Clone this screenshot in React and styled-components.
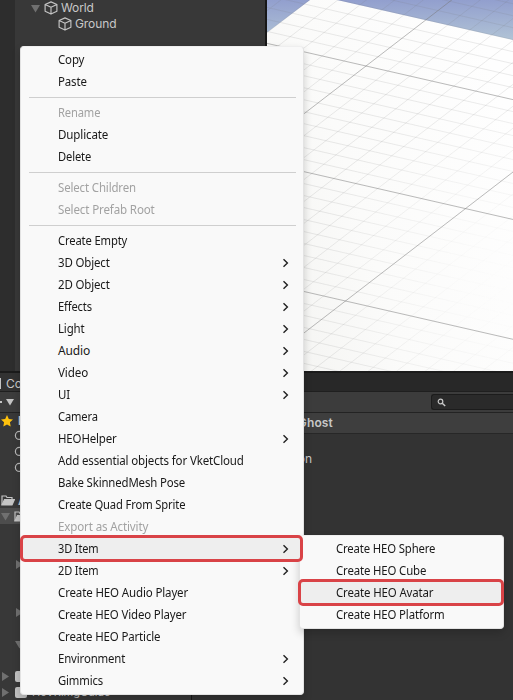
import React from "react";
import styled, { createGlobalStyle } from "styled-components";

const GlobalStyle = createGlobalStyle`
  * { box-sizing: border-box; }
  body { margin: 0; background: #333; overflow: hidden; }
`;

const Editor = styled.div`
  position: relative;
  width: 513px;
  height: 700px;
  overflow: hidden;
  display: grid;
  grid-template-rows: 371px 329px;
  background: #333333;
  color: #c8c8c8;
  font-family: Inter, "Liberation Sans", sans-serif;
  font-size: 12px;
`;

const TopArea = styled.div`
  display: grid;
  grid-template-columns: 15px 250px 2px 246px;
  overflow: hidden;
`;

const Gutter = styled.div`
  background: #2d2d2d;
`;

const Hierarchy = styled.div`
  background: #383838;
`;

const Divider = styled.div`
  background: #171717;
`;

const ObjectRow = styled.div`
  display: flex;
  align-items: center;
  gap: 4px;
  height: 16px;
  padding-left: ${(p) => p.$indent}px;
  line-height: 16px;
`;

const ObjectName = styled.span`
  margin-left: -1px;
  letter-spacing: -0.1px;
`;

const SceneSvg = styled.svg`
  display: block;
`;

const ProjectPanel = styled.div`
  display: grid;
  grid-template-rows: 21px 21px 287px;
  overflow: hidden;
`;

const TabStrip = styled.div`
  background: #282828;
  border-top: 2px solid #1b1b1b;
  border-bottom: 1px solid #1f1f1f;
`;

const ConsoleTab = styled.div`
  display: flex;
  align-items: center;
  gap: 5px;
  width: 21px;
  height: 18px;
  padding-top: 3px;
  overflow: hidden;
  background: #323232;
`;

const TabMark = styled.span`
  flex: none;
  width: 1px;
  height: 11px;
  background: #c4c4c4;
`;

const Toolbar = styled.div`
  display: flex;
  align-items: center;
  justify-content: space-between;
  background: #3c3c3c;
  border-bottom: 1px solid #232323;
`;

const SearchField = styled.div`
  display: flex;
  align-items: center;
  width: 82px;
  height: 16px;
  padding-left: 5px;
  border: 1px solid #1c1c1c;
  border-right: 0;
  border-radius: 3px 0 0 3px;
  background: #2a2a2a;
`;

const Columns = styled.div`
  display: grid;
  grid-template-columns: 191px 1px 321px;
`;

const Tree = styled.div`
  background: #383838;
`;

const TreeRow = styled.div`
  display: flex;
  align-items: center;
  width: ${(p) => (p.$clip ? "20px" : "auto")};
  height: ${(p) => p.$height ?? 16}px;
  gap: ${(p) => p.$gap ?? 3}px;
  padding-left: ${(p) => p.$indent ?? 0}px;
  overflow: hidden;
  background: ${(p) => (p.$selected ? "#4d4d4d" : "transparent")};
  font-size: ${(p) => p.$size ?? 12}px;
  font-weight: ${(p) => (p.$bold ? 700 : 400)};
  white-space: nowrap;

  svg {
    flex: none;
  }
`;

const FolderTile = styled.span`
  width: 12px;
  height: 11px;
  border-radius: 2px;
  background: #c2c2c2;
`;

const Contents = styled.div`
  background: #333333;
`;

const Breadcrumb = styled.div`
  width: 321px;
  height: 21px;
  padding-right: 180px;
  text-align: right;
  line-height: 20px;
  font-weight: 600;
  letter-spacing: 0.15px;
  white-space: nowrap;
  background: #3e3e3e;
  border-bottom: 1px solid #272727;
`;

const AssetRow = styled.div`
  width: 120px;
  margin-top: 17px;
  line-height: 16px;
  text-align: right;
`;

const Menu = styled.div`
  position: absolute;
  left: ${(p) => p.$x}px;
  top: ${(p) => p.$y}px;
  width: ${(p) => p.$width}px;
  height: ${(p) => p.$height}px;
  padding: 2px 0 3px;
  border: 1px solid #e3e3e3;
  border-top-color: #efefef;
  border-radius: 4px;
  background: #f9f9f9;
  box-shadow: 0 4px 8px rgba(0, 0, 0, 0.18);
  color: #191919;
  font-family: "Noto Sans", "Open Sans", sans-serif;
  font-size: 12px;
`;

const MenuItem = styled.div`
  display: flex;
  align-items: center;
  justify-content: space-between;
  height: 22px;
  padding: 0 14px 0 ${(p) => p.$inset ?? 37}px;
  color: ${(p) => (p.$disabled ? "#a2a2a2" : "inherit")};
  line-height: 22px;
  white-space: nowrap;
`;

const Label = styled.span`
  transform: scaleX(${(p) => p.$fit ?? 0.955});
  transform-origin: left center;
  letter-spacing: -0.15px;
`;

const Separator = styled.hr`
  height: 1px;
  margin: 4px 7px 4px 8px;
  border: 0;
  background: #cfcfcf;
`;

const Highlight = styled(MenuItem)`
  position: relative;
  z-index: 1;
  height: 27px;
  margin: -3px ${(p) => p.$right ?? 0}px -2px ${(p) => p.$left ?? -1}px;
  padding: 1px 11px 0 ${(p) => (p.$inset ?? 37) - 3 - (p.$left ?? -1)}px;
  border: 3px solid #d94347;
  border-radius: 5px;
  background: #eeeeee;
`;

function Cube() {
  return (
    <svg width="14" height="14" viewBox="0 0 14 14" fill="none" stroke="#c4c4c4" strokeWidth="1.15" strokeLinejoin="round">
      <path d="M7 .9 12.9 3.5v6.8L7 13.1 1.1 10.3V3.5ZM1.1 3.5 7 6.2l5.9-2.7M7 6.2v6.9" />
    </svg>
  );
}

function Arrow({ down, dim = "#707070", size = 9 }) {
  return (
    <svg width={size} height={size} viewBox="0 0 9 9" fill={dim}>
      <path d={down ? "M0 1h9L4.5 8.5Z" : "M1 0v9l7-4.5Z"} />
    </svg>
  );
}

function Chevron() {
  return (
    <svg width="7" height="10" viewBox="0 0 7 10" fill="none" stroke="#222" strokeWidth="1.4">
      <path d="M1.5 1.2 5.4 5 1.5 8.8" />
    </svg>
  );
}

function Lens() {
  return (
    <svg width="9" height="9" viewBox="0 0 9 9" fill="none" stroke="#c9c9c9" strokeWidth="1.2">
      <circle cx="3.5" cy="3.5" r="2.3" />
      <path d="m5.2 5.2 3 2.8" strokeWidth="1.5" />
    </svg>
  );
}

function FilterLens() {
  return (
    <svg width="14" height="12" viewBox="0 0 14 12" fill="none" stroke="#b8b8b8" strokeWidth="1.2">
      <circle cx="5.4" cy="5.4" r="4" />
      <path d="m8.3 8.3 3.4 3.2" strokeWidth="1.6" />
    </svg>
  );
}

function Star() {
  return (
    <svg width="12" height="12" viewBox="0 0 12 12" fill="#ffc20d">
      <path d="m6 0 1.8 3.9 4.2.5-3.1 2.9.8 4.3L6 9.5l-3.7 2.1.8-4.3L0 4.4l4.2-.5Z" />
    </svg>
  );
}

function OpenFolder() {
  return (
    <svg width="14" height="11" viewBox="0 0 14 11" fill="none" stroke="#c4c4c4" strokeWidth="1.2">
      <path d="M1 10V1h4l1 1.5h5V4" />
      <path d="M1 10 3.5 4.5H13.4L11 10Z" fill="#c4c4c4" />
    </svg>
  );
}

function gridLines() {
  const lines = [];
  const ux = 219.5, uy = 50.2, vx = -120, vy = 92.4;
  for (let i = -16; i <= 34; i++) {
    const t = i / 10;
    const major = i % 10 === 0;
    lines.push({
      key: `u${i}`, major,
      x1: 99 + ux * t - vx * 2, y1: 66 + uy * t - vy * 2,
      x2: 99 + ux * t + vx * 5, y2: 66 + uy * t + vy * 5,
    });
    lines.push({
      key: `v${i}`, major,
      x1: 99 + vx * t - ux * 2, y1: 66 + vy * t - uy * 2,
      x2: 99 + vx * t + ux * 3, y2: 66 + vy * t + uy * 3,
    });
  }
  return lines;
}

function Scene() {
  const lines = gridLines();
  const draw = (l) => <line key={l.key} x1={l.x1} y1={l.y1} x2={l.x2} y2={l.y2} />;
  return (
    <SceneSvg width="246" height="371" viewBox="0 0 246 371">
      <defs>
        <linearGradient id="sky" x1="0" y1="0" x2="0" y2="1">
          <stop offset="0" stopColor="#929fce" />
          <stop offset="1" stopColor="#b2c5d6" />
        </linearGradient>
        <linearGradient id="floor" x1="0" y1=".8" x2="1" y2=".35">
          <stop offset="0" stopColor="#f4f4f2" />
          <stop offset=".4" stopColor="#fbfbfa" />
          <stop offset="1" stopColor="#fefefe" />
        </linearGradient>
        <radialGradient id="fade" gradientUnits="userSpaceOnUse" cx="246" cy="290" r="270">
          <stop offset="0" stopColor="#000" />
          <stop offset=".2" stopColor="#222" />
          <stop offset=".75" stopColor="#fff" />
        </radialGradient>
        <mask id="minorMask">
          <rect width="246" height="371" fill="url(#fade)" />
        </mask>
      </defs>
      <rect width="246" height="42" fill="url(#sky)" />
      <path d="M0 32.5 43 0H70L246 40V371H0Z" fill="url(#floor)" />
      <g stroke="#777" strokeOpacity=".15" strokeWidth="1" mask="url(#minorMask)">
        {lines.filter((l) => !l.major).map(draw)}
      </g>
      <g stroke="#777" strokeOpacity=".5" strokeWidth="1">
        {lines.filter((l) => l.major).map(draw)}
      </g>
    </SceneSvg>
  );
}

const sections = [
  [["Copy"], ["Paste"]],
  [["Rename", "off", 0.93], ["Duplicate", "", 0.965], ["Delete", "", 0.93]],
  [["Select Children", "off"], ["Select Prefab Root", "off", 0.965]],
  [
    ["Create Empty", "", 0.935], ["3D Object", "sub"], ["2D Object", "sub"],
    ["Effects", "sub", 0.93], ["Light", "sub"], ["Audio", "sub", 1], ["Video", "sub", 0.97],
    ["UI", "sub"], ["Camera", "", 0.93], ["HEOHelper", "sub"],
    ["Add essential objects for VketCloud", "", 0.96], ["Bake SkinnedMesh Pose", "", 0.95],
    ["Create Quad From Sprite", "", 0.935], ["Export as Activity", "off", 0.965],
    ["3D Item", "active", 0.92], ["2D Item", "sub", 0.92],
    ["Create HEO Audio Player", "", 0.96], ["Create HEO Video Player"],
    ["Create HEO Particle"], ["Environment", "sub", 0.95], ["Gimmics", "sub", 0.94],
  ],
];

function Entry({ label, kind, fit }) {
  const Row = kind === "active" ? Highlight : MenuItem;
  return (
    <Row $disabled={kind === "off"}>
      <Label $fit={fit}>{label}</Label>
      {(kind === "sub" || kind === "active") && <Chevron />}
    </Row>
  );
}

export default function App() {
  return (
    <>
      <GlobalStyle />
      <Editor>
        <TopArea>
          <Gutter />
          <Hierarchy>
            <ObjectRow $indent={16}><Arrow down /><Cube /><ObjectName>World</ObjectName></ObjectRow>
            <ObjectRow $indent={43}><Cube /><ObjectName>Ground</ObjectName></ObjectRow>
          </Hierarchy>
          <Divider />
          <Scene />
        </TopArea>
        <ProjectPanel>
          <TabStrip><ConsoleTab><TabMark />Console</ConsoleTab></TabStrip>
          <Toolbar>
            <TreeRow $gap={4}>
              <svg width="2" height="2"><rect width="2" height="2" fill="#c4c4c4" /></svg>
              <Arrow down dim="#c4c4c4" size={8} />
            </TreeRow>
            <SearchField><Lens /></SearchField>
          </Toolbar>
          <Columns>
            <Tree>
              <TreeRow $indent={1} $gap={5} $height={15} $bold $clip><Star />Favorites</TreeRow>
              <TreeRow $indent={14}><FilterLens /></TreeRow>
              <TreeRow $indent={14}><FilterLens /></TreeRow>
              <TreeRow $indent={14}><FilterLens /></TreeRow>
              <TreeRow />
              <TreeRow $indent={1} $bold $clip><OpenFolder />Assets</TreeRow>
              <TreeRow $indent={1} $gap={4} $selected><Arrow down /><OpenFolder /></TreeRow>
              <TreeRow /><TreeRow />
              <TreeRow $indent={15}><Arrow /></TreeRow>
              <TreeRow /><TreeRow />
              <TreeRow $indent={15}><Arrow /></TreeRow>
              <TreeRow />
              <TreeRow $indent={15}><Arrow down /></TreeRow>
              <TreeRow />
              <TreeRow $indent={1} $gap={5}><Arrow /><FolderTile /></TreeRow>
              <TreeRow $indent={1} $gap={5} $size={11}><Arrow /><FolderTile />HoVRimgGuide</TreeRow>
            </Tree>
            <Divider />
            <Contents>
              <Breadcrumb>Ghost</Breadcrumb>
              <AssetRow>Animation</AssetRow>
            </Contents>
          </Columns>
        </ProjectPanel>

        <Menu $x={20} $y={46} $width={284} $height={649}>
          {sections.map((items, i) => (
            <React.Fragment key={i}>
              {i > 0 && <Separator />}
              {items.map(([label, kind, fit]) => <Entry key={label} label={label} kind={kind} fit={fit} />)}
            </React.Fragment>
          ))}
        </Menu>

        <Menu $x={299} $y={535} $width={205} $height={94}>
          <MenuItem $inset={36}><Label $fit={0.945}>Create HEO Sphere</Label></MenuItem>
          <MenuItem $inset={36}><Label $fit={0.95}>Create HEO Cube</Label></MenuItem>
          <Highlight $inset={36} $left={-2} $right={-1}><Label $fit={0.955}>Create HEO Avatar</Label></Highlight>
          <MenuItem $inset={36}><Label $fit={0.95}>Create HEO Platform</Label></MenuItem>
        </Menu>
      </Editor>
    </>
  );
}
